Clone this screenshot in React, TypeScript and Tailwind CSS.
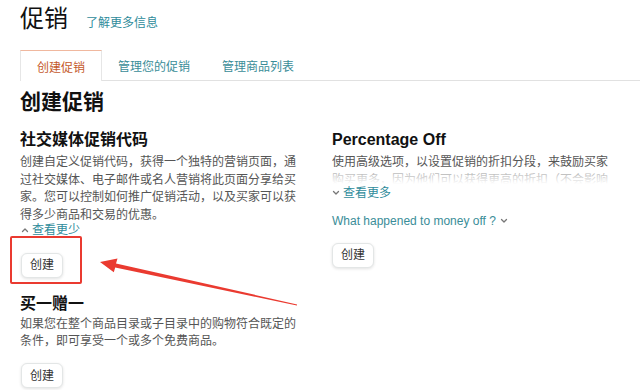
const font = { fontFamily: '"Liberation Sans", "Noto Sans CJK SC", sans-serif' };

function Chevron({ up = false }: { up?: boolean }) {
  return (
    <svg width="8" height="6" viewBox="0 0 8 6" className="shrink-0">
      <path
        d={up ? "M1.5 4.5 L4 2 L6.5 4.5" : "M1.5 1.5 L4 4 L6.5 1.5"}
        fill="none"
        stroke="#777"
        strokeWidth="1.3"
        strokeLinecap="round"
        strokeLinejoin="round"
      />
    </svg>
  );
}

function CreateButton() {
  return (
    <button className="h-[25px] w-[42px] rounded-[6px] border border-[#e3e6e6] bg-white text-[12px] leading-none text-[#333] shadow-[0_1px_3px_rgba(15,17,17,0.12)]">
      创建
    </button>
  );
}

export default function App() {
  return (
    <div className="relative h-[390px] w-[640px] overflow-hidden bg-white" style={font}>
      <div className="px-[20px] pt-[5px]">
        <div className="flex items-baseline gap-[18px]">
          <h1 className="text-[24px] font-normal leading-[28px] text-[#111]">促销</h1>
          <a className="text-[12px] text-[#2f8c9b]">了解更多信息</a>
        </div>
      </div>

      <div className="ml-[20px] mt-[17px] flex border-b border-[#e1e1e1]">
        <div className="-mb-px flex h-[31px] items-center border-x border-t border-x-[#e6e6e6] border-t-[#f0b89f] bg-white px-[16px] pt-[4px] text-[12px] text-[#c45a2c]">
          创建促销
        </div>
        <div className="flex h-[30px] items-center px-[16px] pt-[4px] text-[12px] text-[#3a8d98]">管理您的促销</div>
        <div className="flex h-[30px] items-center px-[16px] pt-[4px] text-[12px] text-[#3a8d98]">管理商品列表</div>
      </div>

      <div className="px-[20px]">
        <h2 className="mt-[9px] text-[21px] font-bold leading-[24px] text-[#111]">创建促销</h2>

        <div className="mt-[17px] flex gap-[32px]">
          <div className="w-[280px]">
            <h3 className="text-[16px] font-bold leading-[18px] text-[#111]">社交媒体促销代码</h3>
            <p className="mt-[5px] text-[12px] leading-[17.5px] text-[#555]">
              创建自定义促销代码，获得一个独特的营销页面，通过社交媒体、电子邮件或名人营销将此页面分享给买家。您可以控制如何推广促销活动，以及买家可以获得多少商品和交易的优惠。
            </p>
            <div className="flex h-[12px] items-center gap-[3px] pl-[1px] text-[12px] leading-[12px] text-[#2f8c9b]">
              <Chevron up />
              <span>查看更少</span>
            </div>
            <div className="relative mt-[16px] pl-[1px]">
              <CreateButton />
              <div className="absolute left-[-10px] top-[-16px] h-[48px] w-[72px] rounded-[2px] border-2 border-[#ea3a30]" />
            </div>

            <h3 className="mt-[17px] text-[16px] font-bold leading-[18px] text-[#111]">买一赠一</h3>
            <p className="mt-[3px] text-[12px] leading-[17.5px] text-[#555]">
              如果您在整个商品目录或子目录中的购物符合既定的条件，即可享受一个或多个免费商品。
            </p>
            <div className="mt-[12px] pl-[1px]">
              <CreateButton />
            </div>
          </div>

          <div className="w-[280px]">
            <h3 className="text-[16px] font-bold leading-[18px] text-[#111]">Percentage Off</h3>
            <div className="relative mt-[4px] h-[31px] overflow-hidden">
              <p className="text-[12px] leading-[18px] text-[#555]">
                使用高级选项，以设置促销的折扣分段，来鼓励买家购买更多，因为他们可以获得更高的折扣（不会影响
              </p>
              <div className="absolute inset-x-0 bottom-0 h-[16px] bg-linear-to-b from-white/40 to-white" />
            </div>
            <div className="mt-[3px] flex h-[12px] items-center gap-[3px] text-[12px] leading-[12px] text-[#2f8c9b]">
              <Chevron />
              <span>查看更多</span>
            </div>
            <div className="mt-[14px] flex items-center gap-[4px] text-[12px] leading-[16px] text-[#3a8d98]">
              <span>What happened to money off ?</span>
              <Chevron />
            </div>
            <div className="mt-[13px]">
              <CreateButton />
            </div>
          </div>
        </div>
      </div>

      <svg className="pointer-events-none absolute inset-0" width="640" height="390">
        <polygon
          points="100,262 117.5,258.5 116,263.5 297.1,304.4 296.9,305.6 115.2,267.4 113.8,272.3"
          fill="#ea3a30"
        />
      </svg>
    </div>
  );
}
